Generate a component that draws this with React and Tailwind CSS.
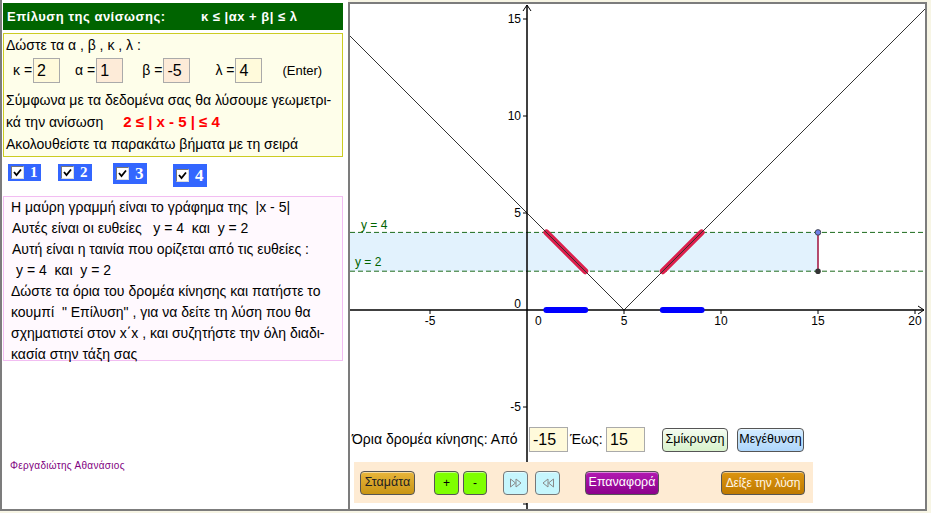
import React from 'react'

// graph coordinates -> page pixels
const X = (x) => 527 + 19.4 * x
const Y = (y) => 310 - 19.4 * y

const CheckBox = ({ n, cls, size = 'text-[15px]' }) => (
  <div className={`flex items-center gap-[6px] bg-[#3366ff] pl-[3px] ${cls}`}>
    <div className="w-[13px] h-[13px] bg-white border border-t-[#777] border-l-[#777] border-r-[#ddd] border-b-[#ddd] flex items-center justify-center">
      <svg width="9" height="9" viewBox="0 0 9 9">
        <path d="M1 4 L3.5 7 L8 1.5" stroke="#000" strokeWidth="1.8" fill="none" />
      </svg>
    </div>
    <span className={`text-white font-bold font-['Liberation_Serif',serif] leading-none ${size}`}>{n}</span>
  </div>
)

const Field = ({ v, cls }) => (
  <div className={`h-[25px] border border-[#aaa] flex items-center pl-[3px] text-[16px] ${cls}`}>{v}</div>
)

const Btn = ({ children, cls }) => (
  <div className={`h-[24px] rounded-[4px] border border-[#555] flex items-center justify-center whitespace-nowrap shadow-[inset_0_1px_0_rgba(255,255,255,0.5)] ${cls}`}>
    {children}
  </div>
)

const Arrows = ({ back }) => (
  <svg width="14" height="10" viewBox="0 0 14 10">
    <g transform={back ? 'translate(14,0) scale(-1,1)' : undefined} stroke="#888" fill="none" strokeWidth="1">
      <path d="M1.5 1 L6.5 5 L1.5 9 Z" />
      <path d="M7 1 L12 5 L7 9 Z" />
    </g>
  </svg>
)

const Graph = () => (
  <svg className="absolute left-0 top-0" width="575" height="505" viewBox="350 4 575 505">
    <rect x="350" y={Y(4)} width={X(15) - 350} height={Y(2) - Y(4)} fill="#e2f2fd" />
    <line x1="350" x2="925" y1={Y(4)} y2={Y(4)} stroke="#1d6b1d" strokeDasharray="5 3" />
    <line x1="350" x2="925" y1={Y(2)} y2={Y(2)} stroke="#1d6b1d" strokeDasharray="5 3" />
    <text x="361" y="229" fontSize="12" fill="#006400" fontFamily="Liberation Sans">y = 4</text>
    <text x="355" y="266" fontSize="12" fill="#006400" fontFamily="Liberation Sans">y = 2</text>
    <line x1={X(1)} y1={Y(4)} x2={X(3)} y2={Y(2)} stroke="#dc1f4c" strokeWidth="6" strokeLinecap="round" />
    <line x1={X(7)} y1={Y(2)} x2={X(9)} y2={Y(4)} stroke="#dc1f4c" strokeWidth="6" strokeLinecap="round" />
    <polyline points={`${X(-9.3)},${Y(14.3)} ${X(5)},${Y(0)} ${X(20.8)},${Y(15.8)}`} stroke="#333" strokeWidth="1" fill="none" />
    <line x1={X(15)} y1={Y(4)} x2={X(15)} y2={Y(2)} stroke="#a0103c" strokeWidth="1.5" />
    <circle cx={X(15)} cy={Y(4)} r="2.8" fill="#7080e8" stroke="#333" strokeWidth="0.8" />
    <circle cx={X(15)} cy={Y(2)} r="2.8" fill="#333" />
    {/* axes */}
    <line x1="350" x2="924" y1="310" y2="310" stroke="#000" strokeWidth="1.5" />
    <polyline points="918,306 924,310 918,314" stroke="#000" fill="none" />
    <line x1="527" x2="527" y1="5" y2="510" stroke="#000" strokeWidth="1.5" />
    <polyline points="523,11 527,5 531,11" stroke="#000" fill="none" />
    {[-5, 5, 10, 15, 20].map((t) => (
      <g key={t}>
        <line x1={X(t)} x2={X(t)} y1="310" y2="314" stroke="#000" />
        <text x={X(t)} y="325" fontSize="12" textAnchor="middle" fontFamily="Liberation Sans">{t}</text>
      </g>
    ))}
    <text x="535" y="325" fontSize="12" fontFamily="Liberation Sans">0</text>
    {[15, 10, 5, -5, -10].map((t) => (
      <g key={t}>
        <line x1="523" x2="527" y1={Y(t)} y2={Y(t)} stroke="#000" />
        {t !== -10 && (
          <text x="521" y={Y(t) + 4} fontSize="12" textAnchor="end" fontFamily="Liberation Sans">{t}</text>
        )}
      </g>
    ))}
    <text x="521" y="308" fontSize="12" textAnchor="end" fontFamily="Liberation Sans">0</text>
    <line x1={X(1)} x2={X(3)} y1="310" y2="310" stroke="#0000ff" strokeWidth="6" strokeLinecap="round" />
    <line x1={X(7)} x2={X(9)} y1="310" y2="310" stroke="#0000ff" strokeWidth="6" strokeLinecap="round" />
  </svg>
)

export default function App() {
  return (
    <div className="w-[931px] h-[513px] bg-[#f7f5e5] overflow-hidden font-['Liberation_Sans',Arial,sans-serif] text-black">
      <div className="flex w-[928px] h-[511px]">
        {/* left panel */}
        <div className="w-[348px] h-full border-l-2 border-b-2 border-[#7c7c7c] bg-white flex flex-col">
          <div className="mt-[3px] ml-[1px] w-[340px] h-[27px] bg-[#006400] text-white font-bold text-[13px] tracking-[0.5px] flex items-center pl-[4px]">
            <span className="w-[194px]">Επίλυση της ανίσωσης:</span>
            <span>κ ≤ |αx + β| ≤ λ</span>
          </div>
          <div className="mt-[3px] ml-[1px] w-[340px] h-[124px] border border-[#cccc22] bg-[#fefeea] pl-[2px] text-[14px] leading-[21px]">
            <div className="pt-[1px]">Δώστε τα α , β , κ , λ :</div>
            <div className="mt-[2px] flex items-center h-[25px]">
              <span className="ml-[7px]">κ =</span>
              <Field v="2" cls="ml-[1px] w-[27px] bg-[#fffadb]" />
              <span className="ml-[15px]">α =</span>
              <Field v="1" cls="ml-[1px] w-[27px] bg-[#fdebd8]" />
              <span className="ml-[19px]">β =</span>
              <Field v="-5" cls="ml-[1px] w-[27px] bg-[#fdebd8]" />
              <span className="ml-[25px]">λ =</span>
              <Field v="4" cls="ml-[1px] w-[27px] bg-[#fffadb]" />
              <span className="ml-[20px] text-[13px]">(Enter)</span>
            </div>
            <div className="mt-[7px]">Σύμφωνα με τα δεδομένα σας θα λύσουμε γεωμετρι-</div>
            <div>
              κά την ανίσωση
              <span className="ml-[20px] text-[#ff0000] font-bold text-[15px]">2 ≤ | x - 5 | ≤ 4</span>
            </div>
            <div className="mt-[1px]">Ακολουθείστε τα παρακάτω βήματα με τη σειρά</div>
          </div>
          <div className="mt-[7px] flex items-start">
            <CheckBox n="1" cls="ml-[6px] w-[33px] h-[17px]" />
            <CheckBox n="2" cls="ml-[17px] w-[34px] h-[17px]" />
            <CheckBox n="3" cls="ml-[21px] w-[34px] h-[21px] -mt-[1px]" size="text-[17px]" />
            <CheckBox n="4" cls="ml-[26px] w-[34px] h-[23px]" size="text-[17px]" />
          </div>
          <div className="mt-[9px] ml-[1px] w-[340px] h-[165px] border border-[#f2bdf2] bg-[#fff9fe] pl-[7px] text-[14px] leading-[21px]">
            <div>Η μαύρη γραμμή είναι το γράφημα της &nbsp;|x - 5|</div>
            <div className="pl-[1px]">Αυτές είναι οι ευθείες &nbsp;&nbsp;y = 4 &nbsp;και &nbsp;y = 2</div>
            <div className="pl-[1px]">Αυτή είναι η ταινία που ορίζεται από τις ευθείες :</div>
            <div className="pl-[5px]">y = 4 &nbsp;και &nbsp;y = 2</div>
            <div>Δώστε τα όρια του δρομέα κίνησης και πατήστε το</div>
            <div>κουμπί &nbsp;" Επίλυση" , για να δείτε τη λύση που θα</div>
            <div>σχηματιστεί στον x΄x , και συζητήστε την όλη διαδι-</div>
            <div>κασία στην τάξη σας</div>
          </div>
          <div className="mt-[97px] ml-[8px] text-[10px] tracking-[0.3px] text-[#800080]">Φεργαδιώτης Αθανάσιος</div>
        </div>

        {/* graphics panel */}
        <div className="relative mt-[2px] w-[579px] h-[509px] border-2 border-[#7c7c7c] bg-white overflow-hidden">
          <Graph />
          <div className="absolute left-[2px] top-[423px] flex items-center h-[25px] text-[14px]">
            <span className="w-[177px]">Όρια δρομέα κίνησης: Από</span>
            <Field v="-15" cls="w-[39px] bg-[#fffadb] text-[15px]" />
            <span className="ml-[2px] w-[36px]">Έως:</span>
            <Field v="15" cls="w-[39px] bg-[#fffadb] text-[15px]" />
            <Btn cls="ml-[17px] w-[66px] text-[12.5px] bg-gradient-to-b from-[#f4fcef] to-[#d8f2cc]">Σμίκρυνση</Btn>
            <Btn cls="ml-[9px] w-[67px] text-[12.5px] bg-gradient-to-b from-[#d4ecff] to-[#aed6fb]">Μεγέθυνση</Btn>
          </div>
          <div className="absolute left-[4px] top-[458px] w-[459px] h-[41px] bg-[#feebd3] flex items-center">
            <Btn cls="ml-[6px] w-[55px] text-[12.5px] bg-gradient-to-b from-[#e8b53a] to-[#c99512] text-[#222]">Σταμάτα</Btn>
            <Btn cls="ml-[19px] w-[25px] bg-[#7fff00] text-[12px]">+</Btn>
            <Btn cls="ml-[4px] w-[24px] bg-[#7fff00] text-[12px]">-</Btn>
            <Btn cls="ml-[16px] w-[25px] bg-[#c6f6fd] border-[#777]"><Arrows /></Btn>
            <Btn cls="ml-[7px] w-[25px] bg-[#c6f6fd] border-[#777]"><Arrows back /></Btn>
            <Btn cls="ml-[25px] w-[74px] text-[12.5px] bg-gradient-to-b from-[#b21ab2] to-[#8c008c] text-white">Επαναφορά</Btn>
            <Btn cls="ml-[62px] w-[84px] text-[12px] tracking-[-0.2px] bg-gradient-to-b from-[#dc9510] to-[#bf7a00] text-[#fff6e6]">Δείξε την λύση</Btn>
          </div>
        </div>
      </div>
    </div>
  )
}
